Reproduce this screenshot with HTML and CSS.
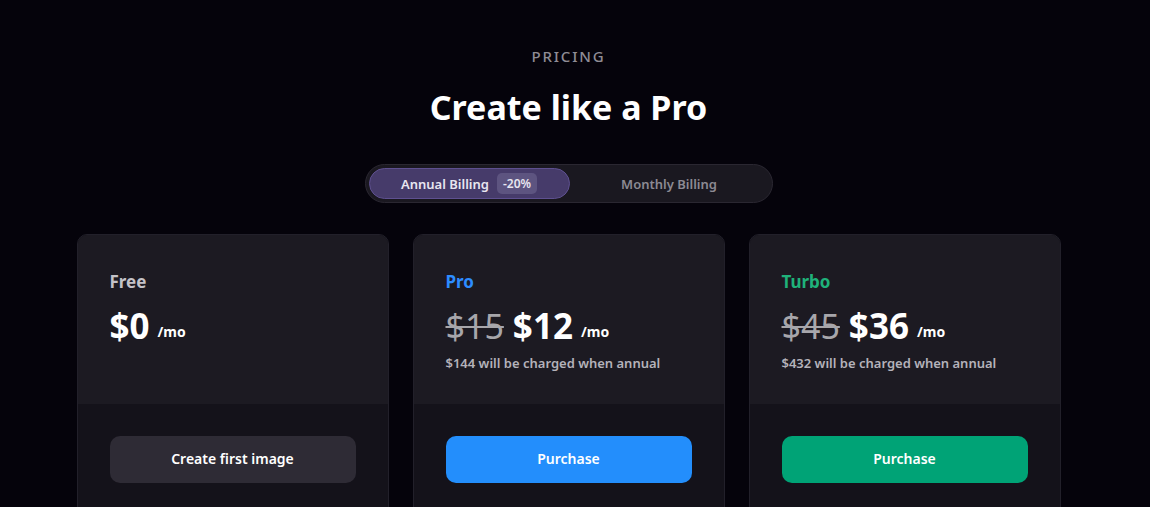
FILE: index.html
```html
<!DOCTYPE html>
<html>
<head>
<meta charset="utf-8">
<link rel="stylesheet" href="styles.css">
</head>
<body>
<main class="page">
  <div class="eyebrow">PRICING</div>
  <h1 class="title">Create like a Pro</h1>
  <div class="toggle">
    <div class="toggle-opt active">Annual Billing <span class="badge">-20%</span></div>
    <div class="toggle-opt">Monthly Billing</div>
  </div>
  <div class="cards">
    <div class="card">
      <div class="card-top">
        <div class="plan plan-free">Free</div>
        <div class="price-row"><span class="price">$0</span><span class="per">/mo</span></div>
      </div>
      <div class="card-bottom">
        <button class="btn btn-free">Create first image</button>
      </div>
    </div>
    <div class="card">
      <div class="card-top">
        <div class="plan plan-pro">Pro</div>
        <div class="price-row"><span class="old">$15</span><span class="price">$12</span><span class="per">/mo</span></div>
        <div class="note">$144 will be charged when annual</div>
      </div>
      <div class="card-bottom">
        <button class="btn btn-pro">Purchase</button>
      </div>
    </div>
    <div class="card">
      <div class="card-top">
        <div class="plan plan-turbo">Turbo</div>
        <div class="price-row"><span class="old">$45</span><span class="price">$36</span><span class="per">/mo</span></div>
        <div class="note">$432 will be charged when annual</div>
      </div>
      <div class="card-bottom">
        <button class="btn btn-turbo">Purchase</button>
      </div>
    </div>
  </div>
</main>
</body>
</html>
```

FILE: styles.css
```css
* { box-sizing: border-box; }
html, body { margin: 0; padding: 0; }
body {
  background: #05030b;
  font-family: "Noto Sans", "Open Sans", sans-serif;
  color: #fff;
  height: 507px;
  overflow: hidden;
}
.page {
  width: 1137px;
  display: flex;
  flex-direction: column;
  align-items: center;
  padding-top: 45px;
}
.eyebrow {
  font-size: 15px;
  letter-spacing: 1.8px;
  color: #8f8c95;
  line-height: 22px;
  font-weight: 500;
}
.title {
  margin: 18px 0 0;
  font-size: 34px;
  font-weight: 700;
  line-height: 44px;
  color: #fff;
}
.toggle {
  margin-top: 35px;
  width: 408px;
  height: 39px;
  border-radius: 20px;
  background: #1a1820;
  border: 1px solid #2a2731;
  padding: 3px;
  display: flex;
}
.toggle-opt {
  flex: 1;
  display: flex;
  align-items: center;
  justify-content: center;
  gap: 8px;
  font-size: 13px;
  font-weight: 600;
  color: #8c8a93;
  border-radius: 16px;
}
.toggle-opt.active {
  background: #463b6a;
  border: 1px solid #5e5090;
  color: #e8e6f0;
}
.badge {
  background: #5d5480;
  color: #e8e6f0;
  font-size: 12px;
  border-radius: 5px;
  padding: 2px 6px;
  line-height: 17px;
}
.cards {
  margin-top: 31px;
  display: flex;
  gap: 24px;
}
.card {
  width: 312px;
  height: 290px;
  border: 1px solid #22202a;
  border-radius: 10px;
  overflow: hidden;
  background: #14121a;
  display: flex;
  flex-direction: column;
}
.card-top {
  background: #1c1a22;
  height: 169px;
  padding: 35px 32px 0;
}
.plan {
  font-size: 17px;
  font-weight: 700;
  line-height: 24px;
}
.plan-free { color: #c4c2c8; }
.plan-pro { color: #2d8cff; }
.plan-turbo { color: #1fb27a; }
.price-row {
  margin-top: 12px;
  display: flex;
  align-items: baseline;
  gap: 8px;
  line-height: 40px;
}
.price {
  font-size: 35px;
  font-weight: 700;
  color: #fff;
}
.old {
  font-size: 34px;
  font-weight: 400;
  color: #a7a6ab;
  text-decoration: line-through;
  text-decoration-thickness: 2px;
  margin-right: 1px;
}
.per {
  font-size: 14px;
  font-weight: 700;
  color: #fff;
  position: relative;
  top: -2px;
}
.note {
  margin-top: 0;
  font-size: 13px;
  font-weight: 600;
  color: #b4b2ba;
  line-height: 18px;
}
.card-bottom {
  padding: 32px 32px 0;
}
.btn {
  width: 100%;
  height: 47px;
  border: none;
  border-radius: 10px;
  font-family: inherit;
  font-size: 14px;
  font-weight: 600;
  color: #fff;
  padding: 0 0 2px;
}
.btn-free { background: #2e2b35; }
.btn-pro { background: #238efc; }
.btn-turbo { background: #00a376; }
```
